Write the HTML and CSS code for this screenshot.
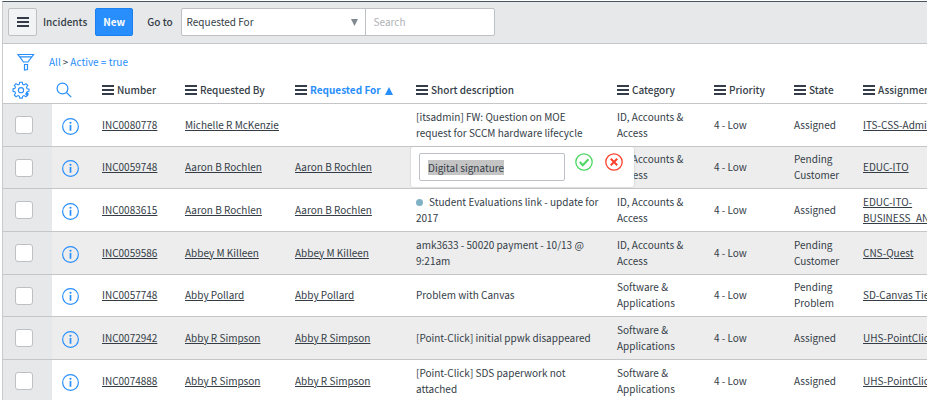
FILE: index.html
```html
<!DOCTYPE html>
<html lang="en">
<head>
<meta charset="utf-8">
<title>Incidents</title>
<link rel="stylesheet" href="styles.css">
</head>
<body>
<svg class="sprite" aria-hidden="true">
  <symbol id="menu" viewBox="0 0 12 10"><path d="M0 1h12M0 5h12M0 9h12" stroke="currentColor" stroke-width="2"/></symbol>
  <symbol id="info" viewBox="0 0 16 16"><circle cx="8" cy="8" r="7.4" fill="none" stroke="currentColor" stroke-width="1.1"/><path d="M8 6.5v5.5" stroke="currentColor" stroke-width="1.6"/><circle cx="8" cy="4.5" r="1" fill="currentColor"/></symbol>
</svg>
<div class="list">
  <header class="toolbar">
    <button class="menu-button" aria-label="List menu"><svg class="icon-menu"><use href="#menu"/></svg></button>
    <h1 class="title">Incidents</h1>
    <button class="new-button">New</button>
    <label class="goto" for="field">Go to</label>
    <div class="search-group">
      <div class="select-wrap">
        <select id="field" class="field-select"><option>Requested For</option></select>
        <svg class="caret" viewBox="0 0 7 7"><path d="M0 0h7L3.500 7z" fill="#818a91"/></svg>
      </div>
      <input class="search" type="text" placeholder="Search" aria-label="Search">
    </div>
  </header>
  <nav class="filter">
    <button class="plain filter-button" aria-label="Filter">
      <svg class="icon-filter" viewBox="0 0 18 18"><path d="M1 1.500h15.500L11 9H6.500z M2.500 3.800h12.500 M7 11.500h3.500v5l-3 .5v-5.500" fill="none" stroke="currentColor" stroke-width="1.200"/></svg>
    </button>
    <span><a href="#">All</a><span class="sep">&gt;</span><a href="#">Active = true</a></span>
  </nav>
  <table class="records">
    <colgroup><col class="c-check"><col class="c-info"><col class="c-number"><col class="c-by"><col class="c-for"><col class="c-desc"><col class="c-cat"><col class="c-pri"><col class="c-state"><col></colgroup>
    <thead>
      <tr>
        <th class="gear-cell"><button class="plain" aria-label="Personalize list"><svg class="icon-gear" viewBox="0 0 18 18"><path d="M7.700 1.200h2.600l.4 2.100 1.400.6 1.800-1.200 1.800 1.800-1.200 1.800.6 1.400 1.900.4v2.200l-1.900.5-.6 1.400 1.200 1.800-1.800 1.800-1.800-1.200-1.400.6-.4 1.900H7.700l-.4-1.900-1.400-.6-1.800 1.200-1.800-1.800 1.200-1.800-.6-1.400-1.900-.4V7.900l1.900-.5.6-1.400-1.200-1.600 1.800-1.800 1.800 1.300 1.400-.6z" fill="none" stroke="currentColor" stroke-width="1.100" stroke-linejoin="round"/><circle cx="9" cy="9.200" r="2.600" fill="none" stroke="currentColor" stroke-width="1.100"/><circle cx="15" cy="13" r="1.700" fill="currentColor"/></svg></button></th>
        <th class="find-cell"><button class="plain" aria-label="Search columns"><svg class="icon-find" viewBox="0 0 16 16"><circle cx="6.500" cy="6.500" r="5.400" fill="none" stroke="currentColor" stroke-width="1.200"/><path d="M10.500 10.500l4.700 4.700" stroke="currentColor" stroke-width="1.200"/></svg></button></th>
        <th><svg class="icon-menu"><use href="#menu"/></svg>Number</th>
        <th><svg class="icon-menu"><use href="#menu"/></svg>Requested By</th>
        <th><svg class="icon-menu"><use href="#menu"/></svg><span class="sorted">Requested For<svg class="sort" viewBox="0 0 8 8"><path d="M0 8L4 0l4 8z" fill="currentColor"/></svg></span></th>
        <th><svg class="icon-menu"><use href="#menu"/></svg>Short description</th>
        <th><svg class="icon-menu"><use href="#menu"/></svg>Category</th>
        <th><svg class="icon-menu"><use href="#menu"/></svg>Priority</th>
        <th><svg class="icon-menu"><use href="#menu"/></svg>State</th>
        <th><svg class="icon-menu"><use href="#menu"/></svg>Assignment</th>
      </tr>
    </thead>
    <tbody>
      <tr>
        <td class="check"><input type="checkbox" aria-label="Select INC0080778"></td>
        <td class="info"><svg class="icon-info"><use href="#info"/></svg></td>
        <td><a href="#">INC0080778</a></td><td><a href="#">Michelle R McKenzie</a></td><td></td>
        <td>[itsadmin] FW: Question on MOE request for SCCM hardware lifecycle</td>
        <td>ID, Accounts &amp; Access</td><td>4 - Low</td><td>Assigned</td><td><a href="#">ITS-CSS-Admin</a></td>
      </tr>
      <tr>
        <td class="check"><input type="checkbox" aria-label="Select INC0059748"></td>
        <td class="info"><svg class="icon-info"><use href="#info"/></svg></td>
        <td><a href="#">INC0059748</a></td><td><a href="#">Aaron B Rochlen</a></td><td><a href="#">Aaron B Rochlen</a></td>
        <td class="editing">
          <div class="editor">
            <input id="edit" class="edit-input" type="text" value="Digital signature" aria-label="Short description">
            <button class="plain ok" aria-label="Save"><svg class="icon-action" viewBox="0 0 18 18"><circle cx="9" cy="9" r="8.200" fill="none" stroke="currentColor" stroke-width="1.300"/><path d="M4.800 9l3 3.200 5.600-6" fill="none" stroke="currentColor" stroke-width="2"/></svg></button>
            <button class="plain cancel" aria-label="Cancel"><svg class="icon-action" viewBox="0 0 18 18"><circle cx="9" cy="9" r="8.200" fill="none" stroke="currentColor" stroke-width="1.300"/><path d="M5.800 5.800l6.400 6.400M12.200 5.800l-6.400 6.400" stroke="currentColor" stroke-width="2"/></svg></button>
          </div>
        </td>
        <td>ID, Accounts &amp; Access</td><td>4 - Low</td><td>Pending Customer</td><td><a href="#">EDUC-ITO</a></td>
      </tr>
      <tr>
        <td class="check"><input type="checkbox" aria-label="Select INC0083615"></td>
        <td class="info"><svg class="icon-info"><use href="#info"/></svg></td>
        <td><a href="#">INC0083615</a></td><td><a href="#">Aaron B Rochlen</a></td><td><a href="#">Aaron B Rochlen</a></td>
        <td><span class="dot"></span>Student Evaluations link - update for 2017</td>
        <td>ID, Accounts &amp; Access</td><td>4 - Low</td><td>Assigned</td><td><a href="#">EDUC-ITO-<br>BUSINESS_AND</a></td>
      </tr>
      <tr>
        <td class="check"><input type="checkbox" aria-label="Select INC0059586"></td>
        <td class="info"><svg class="icon-info"><use href="#info"/></svg></td>
        <td><a href="#">INC0059586</a></td><td><a href="#">Abbey M Killeen</a></td><td><a href="#">Abbey M Killeen</a></td>
        <td>amk3633 - 50020 payment - 10/13 @ 9:21am</td>
        <td>ID, Accounts &amp; Access</td><td>4 - Low</td><td>Pending Customer</td><td><a href="#">CNS-Quest</a></td>
      </tr>
      <tr>
        <td class="check"><input type="checkbox" aria-label="Select INC0057748"></td>
        <td class="info"><svg class="icon-info"><use href="#info"/></svg></td>
        <td><a href="#">INC0057748</a></td><td><a href="#">Abby Pollard</a></td><td><a href="#">Abby Pollard</a></td>
        <td>Problem with Canvas</td>
        <td>Software &amp; Applications</td><td>4 - Low</td><td>Pending Problem</td><td><a href="#">SD-Canvas Tier</a></td>
      </tr>
      <tr>
        <td class="check"><input type="checkbox" aria-label="Select INC0072942"></td>
        <td class="info"><svg class="icon-info"><use href="#info"/></svg></td>
        <td><a href="#">INC0072942</a></td><td><a href="#">Abby R Simpson</a></td><td><a href="#">Abby R Simpson</a></td>
        <td>[Point-Click] initial ppwk disappeared</td>
        <td>Software &amp; Applications</td><td>4 - Low</td><td>Assigned</td><td><a href="#">UHS-PointClick</a></td>
      </tr>
      <tr>
        <td class="check"><input type="checkbox" aria-label="Select INC0074888"></td>
        <td class="info"><svg class="icon-info"><use href="#info"/></svg></td>
        <td><a href="#">INC0074888</a></td><td><a href="#">Abby R Simpson</a></td><td><a href="#">Abby R Simpson</a></td>
        <td>[Point-Click] SDS paperwork not attached</td>
        <td>Software &amp; Applications</td><td>4 - Low</td><td>Assigned</td><td><a href="#">UHS-PointClick</a></td>
      </tr>
    </tbody>
  </table>
</div>
<script src="script.js"></script>
</body>
</html>
```
FILE: styles.css
```css
* { box-sizing: border-box; }
body {
  margin: 0;
  padding: 1px 0 0 2px;
  overflow: hidden;
  background: #fff;
  color: #343d47;
  font: 10px/16px "Noto Sans CJK SC", "Open Sans", sans-serif;
}
button, input, select { font: inherit; color: inherit; margin: 0; }
.sprite { position: absolute; width: 0; height: 0; }
.list { border-left: 1px solid #c8cacc; border-top: 1px solid #485464; }
.plain { padding: 0; border: 0; background: none; color: #278efc; display: block; }
.plain svg, .caret, .icon-info { display: block; }

.toolbar {
  display: flex;
  align-items: center;
  padding: 6px 5px 7px;
  background: #e6e8ea;
  border-bottom: 1px solid #c4c6c8;
}
.menu-button {
  display: grid;
  place-items: center;
  width: 29px;
  height: 28px;
  padding: 0;
  background: #f2f3f5;
  border: 1px solid #bdc0c4;
  border-radius: 2px;
}
.icon-menu { width: 12px; height: 10px; }
.title { margin: 0 8px 0 6px; font-size: 10px; font-weight: 500; }
.new-button {
  width: 38px;
  height: 28px;
  padding: 0;
  border: 1px solid #1c7ff0;
  border-radius: 2px;
  background: #278efc;
  color: #fff;
  font-weight: 700;
}
.goto { margin: 0 8px 0 14px; font-weight: 500; }
.search-group { display: flex; height: 28px; border: 1px solid #bdc0c4; border-radius: 2px; background: #fff; }
.select-wrap { position: relative; width: 184px; border-right: 1px solid #bdc0c4; }
.field-select { width: 100%; height: 100%; padding: 0 5px; border: 0; background: none; appearance: none; }
.caret { position: absolute; right: 7px; top: 10px; width: 7px; height: 7px; pointer-events: none; }
.search { width: 128px; padding: 0 8px; border: 0; background: none; }
.search::placeholder { color: #adb1b5; opacity: 1; }

.filter { display: flex; align-items: center; gap: 14px; padding: 2px 14px 0; height: 34px; }
.filter a { color: #278efc; text-decoration: none; }
.sep { padding: 0 2px; }
.icon-filter { width: 18px; height: 18px; }
.icon-gear { width: 18px; height: 18px; }
.icon-find { width: 16px; height: 16px; }

.records { width: 100%; table-layout: fixed; border-collapse: separate; border-spacing: 0; }
.c-check { width: 49px; }
.c-info { width: 41px; }
.c-number { width: 83px; }
.c-by { width: 110px; }
.c-for { width: 121px; }
.c-desc { width: 201px; }
.c-cat { width: 97px; }
.c-pri { width: 80px; }
.c-state { width: 69px; }
th, td { padding: 0 0 0 9px; text-align: left; vertical-align: middle; border-bottom: 1px solid #c4c6c8; }
th { height: 26px; padding-bottom: 2px; font-weight: 500; white-space: nowrap; }
th .icon-menu { margin-right: 3px; vertical-align: -1px; }
th.find-cell { padding-left: 4px; }
.sorted { color: #278efc; font-weight: 700; }
.sort { width: 8px; height: 8px; margin-left: 4px; vertical-align: -1px; }
tbody tr { height: 43px; }
tbody tr:nth-child(3n+2) { height: 42px; }
tbody tr:nth-child(even) { background: #ededed; }
td:not(.check) { padding-right: 6px; padding-bottom: 1px; }
td:last-child { white-space: nowrap; padding-right: 0; }
td a { color: inherit; text-underline-offset: 1px; }
.check { padding-left: 12px; background: #e6e8ea; }
.check input {
  display: block;
  width: 18px;
  height: 18px;
  appearance: none;
  background: #fff;
  border: 1px solid #bdc0c4;
  border-radius: 3px;
}
td.info { padding: 2px 0 0 10px; color: #278efc; }
.icon-info { width: 17px; height: 17px; }
.dot { display: inline-block; width: 7px; height: 7px; margin-right: 6px; border-radius: 50%; background: #7fb0c6; }
.editing { position: relative; }
.editor {
  position: absolute;
  left: 4px;
  top: 0;
  display: flex;
  gap: 12px;
  width: 223px;
  height: 40px;
  padding: 6px 8px;
  background: #fff;
  border-radius: 2px;
  box-shadow: 0 0 2px #b5b8bb;
}
.edit-input { width: 146px; height: 28px; margin-right: -2px; padding: 0 8px; border: 1px solid #bdc0c4; border-radius: 2px; outline: 0; background: #fff; }
.edit-input::selection { background: #c4c4c4; color: #343d47; }
.icon-action { width: 18px; height: 18px; }
.editor .plain { height: 18px; }
.ok { color: #4bd762; }
.cancel { color: #ff402c; }
```
FILE: script.js
```js
document.getElementById("edit").select();
```
